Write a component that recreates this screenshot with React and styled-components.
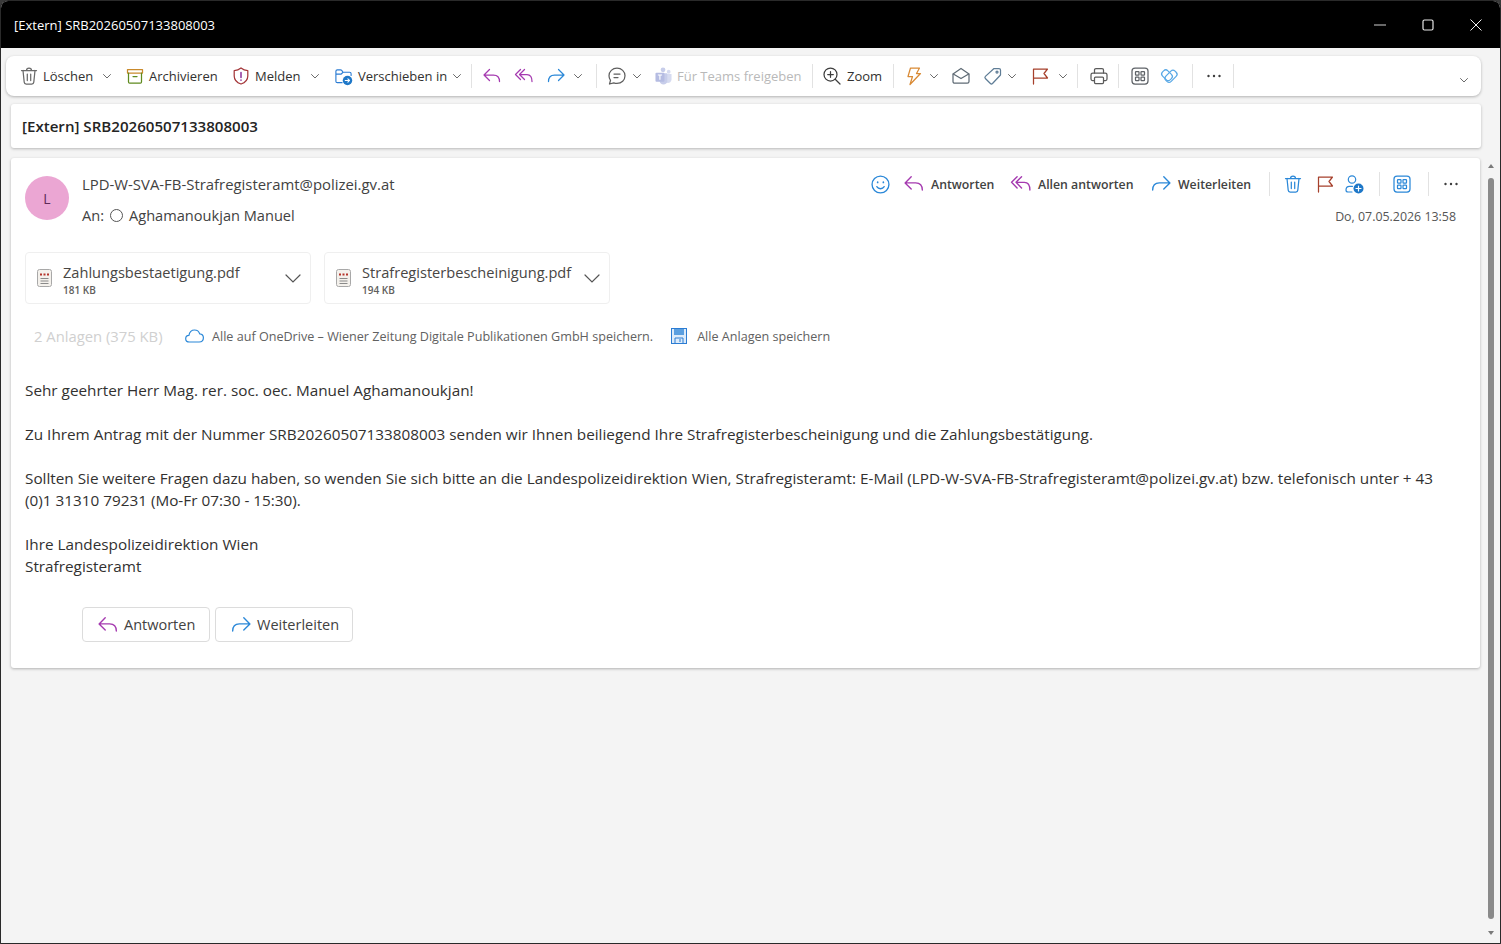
import React from "react";
import styled, { createGlobalStyle } from "styled-components";

const Global = createGlobalStyle`
  html, body {
    margin: 0;
    height: 100%;
    background: #3a3a3a;
    font-family: "Open Sans", "Noto Sans", "Liberation Sans", sans-serif;
  }
  #root { height: 100%; }
  * { box-sizing: border-box; }
`;

const Svg = ({ size = 18, children, color = "#616161", sw = 1.25 }) => (
  <svg
    width={size}
    height={size}
    viewBox="1 1 18 18"
    fill="none"
    stroke={color}
    strokeWidth={sw}
    strokeLinecap="round"
    strokeLinejoin="round"
    style={{ flex: "none", display: "block", overflow: "visible" }}
  >
    {children}
  </svg>
);

const TrashIcon = ({ color = "#6a6a6a", size = 18 }) => (
  <Svg color={color} size={size}>
    <path d="M2.5 4.5h15M7.5 4.5c0-1.500 1-2.500 2.500-2.500s2.500 1 2.500 2.500" />
    <path d="M4 4.500l1.200 11.600c.1 1.100 1 1.900 2 1.900h5.600c1 0 1.900-.8 2-1.900L16 4.500" />
    <path d="M8.300 8v6.500M11.700 8v6.500" />
  </Svg>
);
const ArchiveIcon = () => (
  <Svg>
    <path d="M2.500 3.500h15V7h-15z" stroke="#c98a2c" />
    <path d="M3.500 7v9c0 .8.600 1.200 1.200 1.200h10.600c.6 0 1.200-.4 1.200-1.200V7" stroke="#5f8a1e" />
    <path d="M8 10.500h4" stroke="#5f8a1e" />
  </Svg>
);
const ShieldIcon = () => (
  <Svg>
    <path d="M10 2c2 1.700 4.200 2.500 6.800 2.600V10c0 3.800-2.300 6.500-6.800 8-4.500-1.500-6.800-4.200-6.800-8V4.600C5.800 4.500 8 3.700 10 2z" stroke="#a4373a" />
    <path d="M10 6.500v5M10 14v.3" stroke="#8a2f9a" strokeWidth="1.500" />
  </Svg>
);
const MoveIcon = () => (
  <svg width="19" height="19" viewBox="0 0 20 20" fill="none" style={{ flex: "none", display: "block" }}>
    <path d="M2 15V4.500C2 3.600 2.600 3 3.500 3h3.300c.5 0 1 .2 1.300.6l1.400 1.900h7c.9 0 1.500.6 1.500 1.500v2M2 7.500h5.500l2-2M2 15c0 .9.600 1.500 1.500 1.500h5" stroke="#2b7cd3" strokeWidth="1.200" strokeLinecap="round" />
    <circle cx="14.200" cy="14.200" r="5" fill="#1f78c8" />
    <path d="M11.800 14.200h4.500M14.600 12.400l1.800 1.800-1.800 1.800" stroke="#fff" strokeWidth="1.100" strokeLinecap="round" strokeLinejoin="round" />
  </svg>
);
const ReplyIcon = ({ size = 18 }) => (
  <Svg color="#a53ab0" size={size}>
    <path d="M7.500 3.500L2 9l5.500 5.500M2 9h9.500c3.500 0 6 2.300 6 6.500" />
  </Svg>
);
const ReplyAllIcon = ({ size = 18 }) => (
  <Svg color="#a53ab0" size={size}>
    <path d="M6.500 3.500l-5 5 5 5M10.500 3.500l-5 5 5 5M5.500 8.500H13c3 0 5 2.300 5 7" />
  </Svg>
);
const ForwardIcon = ({ size = 18 }) => (
  <Svg color="#2b88d8" size={size}>
    <path d="M12.500 3.500L18 9l-5.500 5.500M18 9H8.500c-3.500 0-6 2.300-6 6.500" />
  </Svg>
);
const ChatIcon = () => (
  <Svg color="#5f5f5f">
    <path d="M10 2.200c4.500 0 8 3.200 8 7.600s-3.500 7.600-8 7.600c-1.100 0-2.200-.2-3.200-.6L2.500 18l1-3.600C2.500 13 2 11.500 2 9.800c0-4.400 3.500-7.600 8-7.600z" />
    <path d="M7 8h6M7 11.500h4" />
  </Svg>
);
const TeamsIcon = () => (
  <svg width="17" height="18" viewBox="0 0 18 19" style={{ flex: "none", display: "block" }}>
    <circle cx="8.500" cy="3" r="2.500" fill="#c7cdea" />
    <circle cx="14.500" cy="5" r="2" fill="#d6dbf0" />
    <path d="M10 7.500h7.500V13c0 2.500-1.700 4-3.800 4S10 15.500 10 13z" fill="#d6dbf0" />
    <path d="M5 6.500h8V15c0 2-1.800 3.500-4 3.500S5 17 5 15z" fill="#c7cdea" />
    <rect x="0.500" y="6" width="9.500" height="9.500" rx="1" fill="#b5bce2" />
    <path d="M3 8.500h4.500M5.200 8.500v5" stroke="#fff" strokeWidth="1.200" />
  </svg>
);
const ZoomIcon = () => (
  <Svg color="#3d3d3d">
    <circle cx="8.500" cy="8.500" r="6.500" />
    <path d="M13.200 13.200L18 18M8.500 5.700v5.600M5.700 8.500h5.600" />
  </Svg>
);
const BoltIcon = () => (
  <Svg color="#d98a35">
    <path d="M6.500 2h9l-3 5.500h4L6 18.500l2.500-8H4z" />
  </Svg>
);
const EnvelopeIcon = () => (
  <Svg color="#5f6b75">
    <path d="M2 8l8-5.500L18 8v7.500c0 1-.7 1.700-1.700 1.700H3.700c-1 0-1.700-.7-1.700-1.700z" />
    <path d="M2.300 8l7.700 4.500L17.700 8" />
  </Svg>
);
const TagIcon = () => (
  <Svg color="#5f7d96">
    <path d="M11 2.500h5c.8 0 1.500.7 1.500 1.500v5l-8 8.500c-.6.600-1.500.600-2.100 0l-5-5c-.6-.6-.6-1.500 0-2.100z" />
    <circle cx="14" cy="6" r="1" />
  </Svg>
);
const FlagIcon = ({ size = 18 }) => (
  <Svg color="#a6402c" size={size}>
    <path d="M3.500 18V3h14L14 7.500l3.500 4.500h-14" />
  </Svg>
);
const PrintIcon = () => (
  <Svg color="#5a5a5a">
    <path d="M5.500 7V4c0-.8.600-1.500 1.500-1.500h6c.9 0 1.500.7 1.500 1.500v3" />
    <path d="M5 14.500H3.500c-.9 0-1.500-.6-1.500-1.500V8.800C2 7.800 2.800 7 3.800 7h12.400c1 0 1.800.8 1.800 1.800V13c0 .9-.6 1.500-1.500 1.500H15" />
    <rect x="5.500" y="11" width="9" height="6.500" rx="1" />
  </Svg>
);
const AppsIcon = ({ color = "#5f6368" }) => (
  <Svg color={color}>
    <rect x="2" y="2" width="16" height="16" rx="3" />
    <rect x="5.500" y="5.500" width="3.500" height="3.500" rx=".6" />
    <rect x="11" y="5.500" width="3.500" height="3.500" rx=".6" />
    <rect x="5.500" y="11" width="3.500" height="3.500" rx=".6" />
    <rect x="11" y="11" width="3.500" height="3.500" rx=".6" />
  </Svg>
);
const LoopIcon = () => (
  <Svg color="#5aa9e6">
    <rect x="2.500" y="5.500" width="11" height="7.500" rx="3" transform="rotate(45 8 9.250)" />
    <rect x="5.500" y="6.500" width="13" height="7.500" rx="3" transform="rotate(-45 12 10.250)" />
  </Svg>
);
const DotsIcon = () => (
  <svg width="16" height="16" viewBox="0 0 16 16" fill="#3d3d3d" style={{ flex: "none", display: "block" }}>
    <circle cx="2.500" cy="8" r="1.200" />
    <circle cx="8" cy="8" r="1.200" />
    <circle cx="13.500" cy="8" r="1.200" />
  </svg>
);
const SmileIcon = () => (
  <Svg color="#2b88d8" size={19}>
    <circle cx="10" cy="10" r="8" />
    <path d="M6.500 12c.8 1.300 2 2 3.500 2s2.700-.7 3.500-2" />
    <path d="M7.300 7.800v.3M12.700 7.800v.3" strokeWidth="1.600" />
  </Svg>
);
const PersonAddIcon = () => (
  <svg width="20" height="20" viewBox="0 0 20 20" fill="none" style={{ flex: "none", display: "block" }}>
    <circle cx="8" cy="5.500" r="3.700" stroke="#2b88d8" strokeWidth="1.200" />
    <path d="M8 18H4c-1.200 0-2-.8-2-2 0-2.200 1.500-3.700 3.500-3.700h3" stroke="#2b88d8" strokeWidth="1.200" strokeLinecap="round" />
    <circle cx="14.500" cy="14.500" r="5" fill="#1f78c8" />
    <path d="M14.500 12v5M12 14.500h5" stroke="#fff" strokeWidth="1.200" strokeLinecap="round" />
  </svg>
);
const Chevron = ({ size = 10, color = "#6b6b6b" }) => (
  <svg width={size} height={size} viewBox="0 0 10 10" fill="none" stroke={color} strokeWidth={size > 12 ? 0.6 : 1} strokeLinecap="round" style={{ flex: "none", display: "block" }}>
    <path d="M1.500 3.500L5 7l3.500-3.500" />
  </svg>
);
const PdfIcon = () => (
  <svg width="15" height="18" viewBox="0 0 15 18" fill="none" style={{ flex: "none", display: "block" }}>
    <rect x=".5" y=".5" width="14" height="17" rx="2" fill="#f4f1ec" stroke="#a8a8a8" />
    <path d="M3 5.500h9" stroke="#b5352b" strokeWidth="2.200" strokeDasharray="2 1.500" />
    <path d="M3.500 9.500h8M3.500 12h8M3.500 14.500h8" stroke="#8a8a8a" />
  </svg>
);
const CloudIcon = () => (
  <svg width="19" height="14" viewBox="0 0 19 14" fill="none" stroke="#2b88d8" strokeWidth="1.200" style={{ flex: "none", display: "block" }}>
    <path d="M4.500 13C2.300 13 .7 11.600.7 9.700c0-1.800 1.400-3.200 3.200-3.300C4.500 3.300 6.700 1 9.500 1c2.500 0 4.500 1.500 5.200 3.800 2.100.2 3.700 1.900 3.700 4 0 2.400-1.800 4.200-4.200 4.200z" />
  </svg>
);
const SaveIcon = () => (
  <svg width="16" height="16" viewBox="0 0 16 16" fill="none" style={{ flex: "none", display: "block" }}>
    <rect x=".5" y=".5" width="15" height="15" fill="#dcebfa" stroke="#2b7cd3" />
    <rect x="3" y="1" width="10" height="6" fill="#5a9fe0" />
    <path d="M4 15v-5h8v5M9 11v3" stroke="#2b7cd3" />
  </svg>
);

const Win = styled.div`
  height: 100vh;
  display: flex;
  flex-direction: column;
  background: #f4f4f4;
  border: 1px solid #2a2a2a;
  border-radius: 8px 8px 0 0;
  overflow: hidden;
`;
const TitleBar = styled.header`
  height: 47px;
  flex: none;
  background: #000;
  color: #fff;
  display: flex;
  align-items: center;
  padding: 0 0 0 13px;
  font-size: 13px;
`;
const TitleText = styled.div`
  flex: 1;
`;
const WinButtons = styled.div`
  display: flex;
  align-items: center;
  gap: 36px;
  padding-right: 18px;
`;
const Toolbar = styled.nav`
  height: 40px;
  flex: none;
  margin: 8px 19px 0 5px;
  padding-left: 14px;
  background: #fff;
  border-radius: 8px;
  box-shadow: 0 1px 3px rgba(0, 0, 0, 0.28);
  display: flex;
  align-items: center;
`;
const Tool = styled.div`
  display: flex;
  align-items: center;
  gap: ${(p) => p.$gap ?? 5}px;
  margin-left: ${(p) => p.$ml ?? 0}px;
  color: ${(p) => (p.$off ? "#b9b9b9" : "#323130")};
  font-size: 13px;
  white-space: nowrap;
`;
const Label = styled.span`
  display: inline-block;
  width: ${(p) => p.$w}px;
`;
const Sep = styled.div`
  width: 1px;
  height: 24px;
  flex: none;
  background: #e2e2e2;
  margin-left: ${(p) => p.$ml ?? 0}px;
`;
const EndChevron = styled.div`
  margin-left: auto;
  margin-right: 12px;
  padding-top: 8px;
`;
const Subject = styled.div`
  height: 44px;
  flex: none;
  margin: 8px 19px 0 10px;
  padding-left: 11px;
  background: #fff;
  border-radius: 3px;
  box-shadow: 0 1px 3px rgba(0, 0, 0, 0.25);
  display: flex;
  align-items: center;
  font-size: 15.1px;
  font-weight: 600;
  color: #242424;
`;
const Reading = styled.div`
  flex: 1;
  display: flex;
  min-height: 0;
  margin-top: 10px;
`;
const Pane = styled.main`
  flex: 1;
  padding: 0 0 0 10px;
  min-width: 0;
`;
const Card = styled.article`
  height: 510px;
  background: #fff;
  border-radius: 3px;
  box-shadow: 0 1px 3px rgba(0, 0, 0, 0.28);
  padding: 18px 21px 0 14px;
`;
const Scroll = styled.div`
  width: 14px;
  margin: 0 2px 0 4px;
  display: flex;
  flex-direction: column;
  align-items: center;
  padding-bottom: 8px;
`;
const Arrow = styled.div`
  width: 0;
  height: 0;
  border-left: 3px solid transparent;
  border-right: 3px solid transparent;
  ${(p) => (p.$up ? "border-bottom: 4px solid #7a7a7a;" : "border-top: 4px solid #7a7a7a;")}
  margin: ${(p) => (p.$up ? "6px 0 10px" : "12px 0 0")};
`;
const Thumb = styled.div`
  flex: 1;
  width: 6px;
  background: #8a8a8a;
  border-radius: 3px;
`;
const Head = styled.div`
  display: flex;
  align-items: flex-start;
`;
const Avatar = styled.div`
  width: 44px;
  height: 44px;
  flex: none;
  border-radius: 50%;
  background: #eba6d3;
  color: #5f2a58;
  display: flex;
  align-items: center;
  justify-content: center;
  font-size: 14px;
`;
const Who = styled.div`
  margin-left: 13px;
  flex: 1;
  color: #424242;
`;
const Sender = styled.div`
  font-size: 14.9px;
  line-height: 20px;
  margin-bottom: 11px;
  margin-top: -2px;
`;
const Recipient = styled.div`
  display: flex;
  align-items: center;
  gap: 6px;
  font-size: 14.6px;
  line-height: 20px;
`;
const Ring = styled.span`
  width: 13px;
  height: 13px;
  border: 1.5px solid #555;
  border-radius: 50%;
`;
const RightCol = styled.div`
  display: flex;
  flex-direction: column;
  align-items: flex-end;
  margin-top: -4px;
`;
const Actions = styled.div`
  display: flex;
  align-items: center;
  height: 24px;
`;
const Act = styled(Tool)`
  font-size: 12.3px;
  font-weight: 600;
  gap: 7px;
  color: #424242;
`;
const DateLine = styled.div`
  margin: 12px 3px 0 0;
  font-size: 12.4px;
  color: #555;
  line-height: 18px;
`;
const Chips = styled.div`
  display: flex;
  gap: 13px;
  margin-top: 26px;
`;
const Chip = styled.div`
  width: 286px;
  height: 52px;
  border: 1px solid #efefef;
  border-radius: 4px;
  display: flex;
  align-items: center;
  padding: 0 7px 0 11px;
`;
const ChipText = styled.div`
  flex: 1;
  margin-left: 11px;
  min-width: 0;
`;
const ChipName = styled.div`
  font-size: 14.6px;
  color: #484644;
  line-height: 18px;
  margin-top: 3px;
`;
const ChipSize = styled.div`
  font-size: 10px;
  font-weight: 600;
  color: #605e5c;
  line-height: 14px;
  margin-top: 2px;
`;
const AttachRow = styled.div`
  display: flex;
  align-items: center;
  height: 20px;
  margin-top: 22px;
  padding-left: 9px;
  font-size: 12.6px;
  color: #616161;
  white-space: nowrap;
`;
const Count = styled.span`
  font-size: 14.8px;
  color: #d0d0d0;
  width: 151px;
`;
const AttachAction = styled.span`
  display: flex;
  align-items: center;
  gap: ${(p) => p.$gap ?? 8}px;
  margin-right: ${(p) => p.$mr ?? 0}px;
`;
const Body = styled.div`
  margin-top: 33px;
  font-size: 15.3px;
  line-height: 22px;
  color: #323130;
  white-space: nowrap;
`;
const Para = styled.p`
  margin: 0 0 22px;
`;
const ReplyRow = styled.div`
  display: flex;
  gap: 5px;
  margin: 30px 0 0 57px;
`;
const ReplyBtn = styled.button`
  height: 35px;
  width: ${(p) => p.$w}px;
  padding: 0 0 0 15px;
  background: #fff;
  border: 1px solid #dcdcdc;
  border-radius: 4px;
  display: flex;
  align-items: center;
  gap: 6px;
  font: inherit;
  font-size: 14.5px;
  color: #424242;
`;

export default function App() {
  return (
    <>
      <Global />
      <Win>
        <TitleBar>
          <TitleText>[Extern] SRB20260507133808003</TitleText>
          <WinButtons>
            <svg width="12" height="12" viewBox="0 0 12 12" stroke="#d0d0d0" strokeWidth="1"><path d="M0 6h12" /></svg>
            <svg width="12" height="12" viewBox="0 0 12 12" fill="none" stroke="#e8e8e8" strokeWidth="1.200"><rect x="1" y="1" width="10" height="10" rx="1.500" /></svg>
            <svg width="12" height="12" viewBox="0 0 12 12" stroke="#f0f0f0" strokeWidth="1"><path d="M.5.500l11 11M11.500.500l-11 11" /></svg>
          </WinButtons>
        </TitleBar>
        <Toolbar>
          <Tool><TrashIcon /><Label $w={50}>Löschen</Label></Tool>
          <Tool $ml={9}><Chevron /></Tool>
          <Tool $ml={14}><ArchiveIcon /><Label $w={69}>Archivieren</Label></Tool>
          <Tool $ml={14}><ShieldIcon /><Label $w={46}>Melden</Label></Tool>
          <Tool $ml={9}><Chevron /></Tool>
          <Tool $ml={14}><MoveIcon /><Label $w={89}>Verschieben in</Label></Tool>
          <Tool $ml={5}><Chevron /></Tool>
          <Sep $ml={9} />
          <Tool $ml={11}><ReplyIcon /></Tool>
          <Tool $ml={14}><ReplyAllIcon /></Tool>
          <Tool $ml={14}><ForwardIcon /></Tool>
          <Tool $ml={8}><Chevron /></Tool>
          <Sep $ml={13} />
          <Tool $ml={11}><ChatIcon /></Tool>
          <Tool $ml={6}><Chevron /></Tool>
          <Tool $ml={13} $off><TeamsIcon /><Label $w={125}>Für Teams freigeben</Label></Tool>
          <Sep $ml={10} />
          <Tool $ml={10} $gap={6}><ZoomIcon /><Label $w={36}>Zoom</Label></Tool>
          <Sep $ml={10} />
          <Tool $ml={11}><BoltIcon /></Tool>
          <Tool $ml={6}><Chevron /></Tool>
          <Tool $ml={13}><EnvelopeIcon /></Tool>
          <Tool $ml={14}><TagIcon /></Tool>
          <Tool $ml={5}><Chevron /></Tool>
          <Tool $ml={14}><FlagIcon /></Tool>
          <Tool $ml={9}><Chevron /></Tool>
          <Sep $ml={9} />
          <Tool $ml={12}><PrintIcon /></Tool>
          <Sep $ml={10} />
          <Tool $ml={12}><AppsIcon /></Tool>
          <Tool $ml={11}><LoopIcon /></Tool>
          <Sep $ml={14} />
          <Tool $ml={13}><DotsIcon /></Tool>
          <Sep $ml={11} />
          <EndChevron><Chevron /></EndChevron>
        </Toolbar>
        <Subject>[Extern] SRB20260507133808003</Subject>
        <Reading>
          <Pane>
            <Card>
              <Head>
                <Avatar>L</Avatar>
                <Who>
                  <Sender>LPD-W-SVA-FB-Strafregisteramt@polizei.gv.at</Sender>
                  <Recipient>An: <Ring /> Aghamanoukjan Manuel</Recipient>
                </Who>
                <RightCol>
                  <Actions>
                    <Act><SmileIcon /></Act>
                    <Act $ml={14}><ReplyIcon size={20} /><Label $w={64}>Antworten</Label></Act>
                    <Act $ml={16}><ReplyAllIcon size={20} /><Label $w={96}>Allen antworten</Label></Act>
                    <Act $ml={17}><ForwardIcon size={20} /><Label $w={73}>Weiterleiten</Label></Act>
                    <Sep $ml={18} />
                    <Act $ml={14}><TrashIcon color="#2b88d8" /></Act>
                    <Act $ml={14}><FlagIcon /></Act>
                    <Act $ml={10}><PersonAddIcon /></Act>
                    <Sep $ml={15} />
                    <Act $ml={13}><AppsIcon color="#2b88d8" /></Act>
                    <Sep $ml={17} />
                    <Act $ml={14}><DotsIcon /></Act>
                  </Actions>
                  <DateLine>Do, 07.05.2026 13:58</DateLine>
                </RightCol>
              </Head>
              <Chips>
                <Chip>
                  <PdfIcon />
                  <ChipText>
                    <ChipName>Zahlungsbestaetigung.pdf</ChipName>
                    <ChipSize>181 KB</ChipSize>
                  </ChipText>
                  <Chevron size={20} color="#555" />
                </Chip>
                <Chip>
                  <PdfIcon />
                  <ChipText>
                    <ChipName>Strafregisterbescheinigung.pdf</ChipName>
                    <ChipSize>194 KB</ChipSize>
                  </ChipText>
                  <Chevron size={20} color="#555" />
                </Chip>
              </Chips>
              <AttachRow>
                <Count>2 Anlagen (375 KB)</Count>
                <AttachAction $mr={18}><CloudIcon />Alle auf OneDrive – Wiener Zeitung Digitale Publikationen GmbH speichern.</AttachAction>
                <AttachAction $gap={10}><SaveIcon />Alle Anlagen speichern</AttachAction>
              </AttachRow>
              <Body>
                <Para>Sehr geehrter Herr Mag. rer. soc. oec. Manuel Aghamanoukjan!</Para>
                <Para>Zu Ihrem Antrag mit der Nummer SRB20260507133808003 senden wir Ihnen beiliegend Ihre Strafregisterbescheinigung und die Zahlungsbestätigung.</Para>
                <Para>Sollten Sie weitere Fragen dazu haben, so wenden Sie sich bitte an die Landespolizeidirektion Wien, Strafregisteramt: E-Mail (LPD-W-SVA-FB-Strafregisteramt@polizei.gv.at) bzw. telefonisch unter + 43<br />(0)1 31310 79231 (Mo-Fr 07:30 - 15:30).</Para>
                <Para>Ihre Landespolizeidirektion Wien<br />Strafregisteramt</Para>
              </Body>
              <ReplyRow>
                <ReplyBtn $w={128}><ReplyIcon size={20} />Antworten</ReplyBtn>
                <ReplyBtn $w={138}><ForwardIcon size={20} />Weiterleiten</ReplyBtn>
              </ReplyRow>
            </Card>
          </Pane>
          <Scroll>
            <Arrow $up />
            <Thumb />
            <Arrow />
          </Scroll>
        </Reading>
      </Win>
    </>
  );
}
